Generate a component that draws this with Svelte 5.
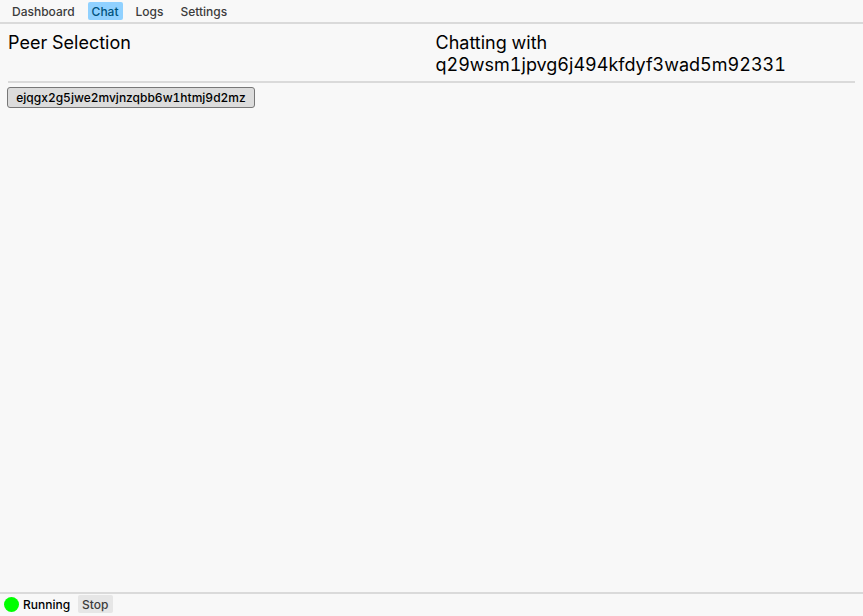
<script>
  const tabs = ['Dashboard', 'Chat', 'Logs', 'Settings'];
  let active = $state('Chat');
  let running = $state(true);
  const peers = ['ejqgx2g5jwe2mvjnzqbb6w1htmj9d2mz'];
</script>

<div class="app">
  <nav>
    {#each tabs as tab}
      <button class="tab" class:active={tab === active} onclick={() => (active = tab)}>{tab}</button>
    {/each}
  </nav>
  <main>
    <header>
      <h2>Peer Selection</h2>
      <h2>Chatting with q29wsm1jpvg6j494kfdyf3wad5m92331</h2>
    </header>
    <div class="peers">
      {#each peers as peer}
        <button class="peer">{peer}</button>
      {/each}
    </div>
  </main>
  <footer>
    <span class="dot" class:off={!running}></span>
    <span class="status">{running ? 'Running' : 'Stopped'}</span>
    <button class="stop" onclick={() => (running = !running)}>{running ? 'Stop' : 'Start'}</button>
  </footer>
</div>

<style>
  :global(body) {
    background: #f8f8f8;
  }
  .app {
    display: flex;
    flex-direction: column;
    min-height: 100vh;
    font-family: Inter, sans-serif;
    font-size: 12px;
    font-weight: 500;
    font-variant-numeric: tabular-nums;
    font-optical-sizing: none;
    line-height: 16px;
    color: #000;
  }
  button {
    font: inherit;
    font-variant-numeric: inherit;
    font-optical-sizing: inherit;
    border: 0;
    border-radius: 2px;
    padding: 2px 4px 0;
    background: none;
    color: #3c3c3c;
  }
  nav {
    display: flex;
    gap: 9px;
    padding: 2px 8px;
    border-bottom: 2px solid #dadada;
  }
  .tab.active {
    background: #90d1ff;
    color: #00537d;
  }
  main {
    flex: 1;
    padding: 8px;
  }
  header {
    display: grid;
    grid-template-columns: 1fr 1fr;
    gap: 8px;
    padding-bottom: 5px;
    border-bottom: 2px solid #dadada;
  }
  h2 {
    margin: 0;
    font-size: 18px;
    font-weight: 400;
    line-height: 22px;
  }
  .peers {
    display: flex;
    flex-direction: column;
    align-items: flex-start;
    padding-top: 4px;
    margin-left: -1px;
  }
  .peer {
    min-width: 248px;
    padding: 2px 4px 1px;
    border: 1px solid #777;
    border-radius: 3px;
    background: #dcdcdc;
    color: #000;
  }
  footer {
    display: flex;
    align-items: center;
    gap: 4px;
    padding: 1px 4px 3px;
    border-top: 2px solid #dadada;
  }
  .dot {
    width: 15px;
    height: 15px;
    border-radius: 50%;
    background: #0f0;
  }
  .dot.off {
    background: #f00;
  }
  .status {
    padding-top: 2px;
  }
  .stop {
    margin-left: 4px;
    background: #e6e6e6;
  }
</style>
